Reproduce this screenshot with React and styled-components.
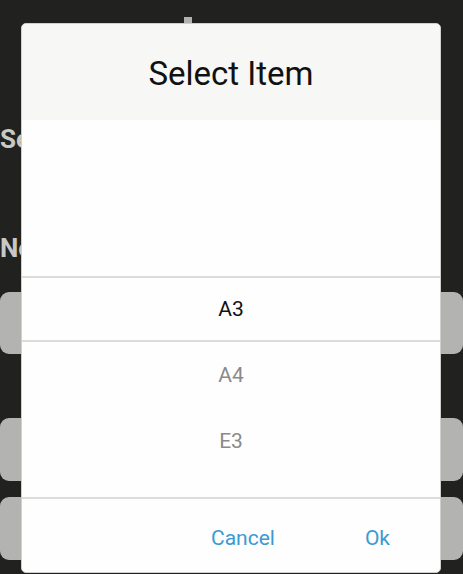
import styled, { createGlobalStyle } from "styled-components";

const GlobalStyle = createGlobalStyle`
  html, body {
    margin: 0;
    padding: 0;
    background: #212220;
    font-family: Roboto, "Liberation Sans", sans-serif;
    overflow: hidden;
  }
`;

const Screen = styled.div`
  width: 463px;
  height: 574px;
  position: relative;
  overflow: hidden;
  background: #212220;
`;

const Behind = styled.div`
  display: flex;
  flex-direction: column;
  padding-top: 17px;
`;

const Notch = styled.div`
  width: 8px;
  height: 8px;
  margin-left: 184px;
  background: #b1b1af;
`;

const Label = styled.div`
  margin-top: ${(p) => p.$top}px;
  color: #c8c8c6;
  font-size: 26px;
  font-weight: 700;
  line-height: 30px;
`;

const BgButton = styled.div`
  margin-top: ${(p) => p.$top}px;
  height: ${(p) => p.$h}px;
  border-radius: 9px;
  background: #b3b3b1;
`;

const Dialog = styled.div`
  position: absolute;
  top: 23px;
  left: 21px;
  width: 420px;
  height: 550px;
  box-sizing: border-box;
  border: 1px solid #cfcfcd;
  border-radius: 5px;
  background: #fdfefd;
  display: flex;
  flex-direction: column;
  overflow: hidden;
`;

const Header = styled.div`
  height: 94px;
  background: #f7f7f6;
  display: flex;
  align-items: center;
  justify-content: center;
  font-size: 33px;
  color: #111;
  padding-top: 2px;
`;

const Picker = styled.div`
  height: 379px;
  box-sizing: border-box;
  padding-top: 156px;
  border-bottom: 2px solid #dcdcdb;
  display: flex;
  flex-direction: column;
`;

const Row = styled.div`
  height: ${(p) => (p.$selected ? 62 : 66)}px;
  flex-shrink: 0;
  display: flex;
  align-items: center;
  justify-content: center;
  font-size: 21px;
  color: ${(p) => (p.$selected ? "#111" : "#8a8a8a")};
  border-top: ${(p) => (p.$selected ? "2px solid #dcdcdb" : "none")};
  border-bottom: ${(p) => (p.$selected ? "2px solid #dcdcdb" : "none")};
`;

const Footer = styled.div`
  flex: 1;
  display: flex;
  align-items: center;
  justify-content: flex-end;
  gap: 90px;
  padding-right: 50px;
  padding-top: 4px;
`;

const Action = styled.button`
  background: none;
  border: none;
  padding: 0;
  font-family: inherit;
  font-size: 21px;
  color: #3b9ad3;
  cursor: pointer;
`;

const items = ["A3", "A4", "E3"];

export default function App() {
  return (
    <Screen>
      <GlobalStyle />
      <Behind>
        <Notch />
        <Label $top={99}>Select</Label>
        <Label $top={79}>Note</Label>
        <BgButton $top={29} $h={62} />
        <BgButton $top={64} $h={63} />
        <BgButton $top={16} $h={63} />
      </Behind>
      <Dialog>
        <Header>Select Item</Header>
        <Picker>
          {items.map((it, i) => (
            <Row key={it} $selected={i === 0}>
              {it}
            </Row>
          ))}
        </Picker>
        <Footer>
          <Action>Cancel</Action>
          <Action>Ok</Action>
        </Footer>
      </Dialog>
    </Screen>
  );
}
